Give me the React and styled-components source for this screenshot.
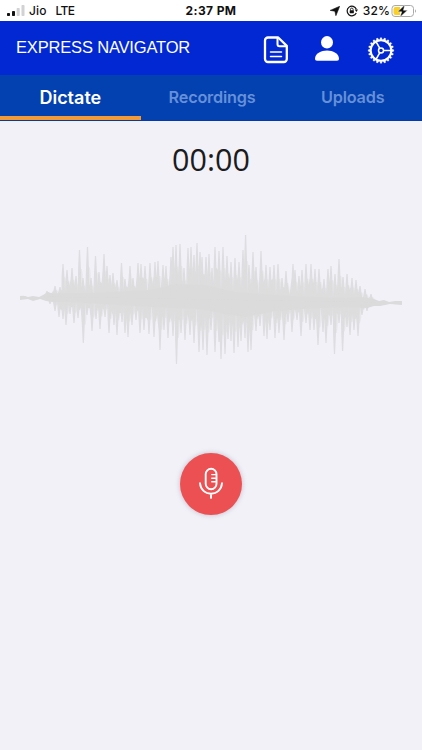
import React from "react";
import styled, { createGlobalStyle } from "styled-components";

const GlobalStyle = createGlobalStyle`
  * {
    box-sizing: border-box;
  }
  body {
    margin: 0;
    background-color: #f2f1f8;
    font-family: Inter, "Liberation Sans", sans-serif;
  }
`;

const AppContainer = styled.div`
  width: 100%;
  height: 750px;
  display: flex;
  flex-direction: column;
  background-color: #f2f1f8;
  overflow: hidden;
`;

const StatusBar = styled.div`
  height: 21px;
  flex: none;
  display: grid;
  grid-template-columns: 1fr auto 1fr;
  align-items: center;
  padding: 1px 5px 0 7px;
  background-color: #fff;
  color: #111;
  font-size: 12px;
  line-height: 20px;
`;

const StatusGroup = styled.div`
  display: flex;
  align-items: center;
  justify-content: ${(props) => (props.$end ? "flex-end" : "flex-start")};
`;

const StatusText = styled.span`
  font-weight: 500;
  margin-left: ${(props) => props.$gap || 0}px;
  letter-spacing: ${(props) => props.$spacing || 0}px;
`;

const Clock = styled.span`
  margin-right: 2px;
  font-size: 12px;
  font-weight: 700;
  letter-spacing: 0.4px;
`;

const Header = styled.header`
  height: 54px;
  flex: none;
  display: flex;
  align-items: center;
  justify-content: space-between;
  padding: 0 27px 0 16px;
  background-color: #0228d3;
`;

const Title = styled.h1`
  margin: 0;
  padding-bottom: 1px;
  color: #fff;
  font-family: "Liberation Sans", sans-serif;
  font-size: 16.5px;
  font-weight: 400;
  letter-spacing: -0.17px;
  white-space: nowrap;
`;

const HeaderIcons = styled.div`
  display: flex;
  align-items: center;
  gap: 25px;
  padding-top: 3px;
`;

const Tabs = styled.nav`
  height: 46px;
  flex: none;
  display: grid;
  grid-template-columns: repeat(3, 1fr);
  background-color: #0340b0;
  border-bottom: 1px solid #0838a0;
`;

const Tab = styled.button`
  border: 0;
  border-bottom: 4px solid ${(props) => (props.$active ? "#f29a38" : "transparent")};
  padding: ${(props) => (props.$active ? "4px 0 0" : "3px 0 0 2px")};
  background: none;
  color: ${(props) => (props.$active ? "#fff" : "#6690d8")};
  font-family: inherit;
  font-size: ${(props) => (props.$active ? 18 : 16.25)}px;
  font-weight: 600;
  letter-spacing: ${(props) => (props.$active ? 0 : -0.2)}px;
`;

const Recorder = styled.main`
  flex: 1;
  display: flex;
  flex-direction: column;
  align-items: center;
`;

const Timer = styled.div`
  margin-top: 17px;
  height: 42px;
  color: #1b1b20;
  font-family: "Open Sans", sans-serif;
  font-size: 30.5px;
  line-height: 42px;
`;

const WaveSvg = styled.svg`
  display: block;
  width: 422px;
  height: 140px;
  margin-top: 50px;
`;

const RecordButton = styled.button`
  display: flex;
  align-items: center;
  justify-content: center;
  width: 62px;
  height: 62px;
  margin-top: 83px;
  padding: 0;
  border: 0;
  border-radius: 50%;
  background-color: #ec5052;
  box-shadow: 0 0 5px rgba(110, 110, 130, 0.4);
`;

// x, y pairs of the peaks above and below the middle of the wave
const upper = [
  [47, 291], [55, 286], [60, 287], [63, 264], [67, 270], [72, 268], [76, 276],
  [79.5, 250], [83, 278], [87.5, 247], [91, 278], [95.5, 256], [99, 272],
  [104, 254], [107, 266], [110, 275], [113, 273], [117, 280], [121.5, 263],
  [125, 279], [130, 266], [133, 278], [138, 263], [141, 264], [145, 266],
  [150, 263], [155, 262], [158, 261], [163, 265], [166, 266], [171, 257],
  [173, 247], [176, 245], [180, 244], [184, 268], [188, 248], [191, 247],
  [194, 255], [197, 243], [200, 252], [202, 257], [206, 257], [209, 254],
  [212, 268], [215, 247], [219, 251], [223, 247], [227, 256], [231, 262],
  [235, 258], [239, 262], [243, 250], [245.6, 235], [249, 265], [253, 252],
  [256, 267], [261, 251], [266, 265], [270, 267], [274, 265], [278, 264],
  [282, 278], [286, 271], [293, 264], [295, 270], [299, 276], [302, 270],
  [306, 264], [311, 264], [315, 269], [319, 269], [324, 279], [328, 269],
  [331, 266], [335, 274], [339, 259], [343, 277], [347, 274], [352, 278],
  [356, 280], [360, 286], [365, 289], [371, 294],
];

const lower = [
  [50, 304], [55, 311], [59, 317], [63, 319], [66, 325], [70, 314], [74, 323],
  [78, 318], [83.3, 343], [87, 315], [92, 331], [96, 319], [100, 329],
  [105, 317], [109, 333], [114, 325], [117, 335], [122, 322], [125, 333],
  [128, 337], [132, 325], [136, 320], [140, 333], [144, 330], [149, 334],
  [154, 337], [160, 350], [164, 330], [168, 338], [173, 336], [176.5, 364],
  [181, 333], [185, 340], [190, 335], [194, 343], [199, 352], [203, 350],
  [207, 355], [211, 330], [215, 352], [219, 342], [221, 359], [225, 354],
  [228, 339], [231, 341], [234, 353], [238, 347], [241, 341], [245, 338],
  [248, 352], [251, 350], [256, 331], [260, 326], [264, 336], [267, 339],
  [270, 330], [275, 338], [279, 333], [284, 340], [288, 322], [292, 332],
  [297, 320], [301, 336], [306, 323], [310, 330], [314, 330], [318, 345],
  [323, 332], [326, 343], [331, 325], [334.5, 354], [339, 323], [342.6, 351],
  [347, 327], [350, 335], [354, 330], [358, 336], [362, 315], [367, 311],
];

// how far the notch between two peaks stays from the middle
const notches = [0.5, 0.3, 0.62, 0.12, 0.42, 0.55, 0.2];

const axis = (x) => 296 + (x / 422) * 7;

function outline(peaks, shoulder) {
  const first = peaks[0][0] - 3;
  const last = peaks[peaks.length - 1][0] + 3;
  const points = [`${first} ${axis(first)}`];
  peaks.forEach(([x, y], i) => {
    const height = y - axis(x);
    const middle = axis(x) + height * shoulder;
    points.push(`${x - 1.4} ${middle}`, `${x - 0.6} ${y}`, `${x + 0.6} ${y}`, `${x + 1.4} ${middle}`);
    const next = peaks[i + 1];
    if (next) {
      const smaller = Math.min(Math.abs(height), Math.abs(next[1] - axis(next[0])));
      const notch = Math.sign(height) * smaller * notches[i % notches.length];
      points.push(`${(x + next[0]) / 2} ${axis(x) + notch}`);
    }
  });
  points.push(`${last} ${axis(last)}`);
  return `M${points.join("L")}Z`;
}

// a shorter copy of the peaks, slightly to the side
const echo = (peaks) => peaks.map(([x, y]) => [x + 1.7, axis(x) + (y - axis(x)) * 0.6]);

function Waveform() {
  return (
    <WaveSvg viewBox="0 230 422 140" fill="#dbdbdc">
      <path d="M20 296Q24 295 28 297L33 296L39 297L43 295L48 292L54 294L60 293L90 293L150 290L175 284L205 285L235 292L290 296L345 298L360 297L368 298L374 299L379 301L384 300L389 302L395 301L402 301V305L390 304L380 306L374 306L367 308L345 307L303 309L275 311L246 317L225 314L200 309L150 307L103 304L70 302L53 302L46 301L40 299L33 301L28 299L20 300Z" />
      <path opacity=".88" d={outline(upper, 0.62)} />
      <path opacity=".88" d={outline(lower, 0.62)} />
      <path opacity=".45" d={outline(echo(upper), 0.8)} />
      <path opacity=".45" d={outline(echo(lower), 0.8)} />
    </WaveSvg>
  );
}

function SignalIcon() {
  return (
    <svg width="19" height="12" viewBox="0 0 19 12">
      <rect x="0" y="8" width="3" height="3" rx=".7" fill="#111" />
      <rect x="5" y="6" width="3" height="5" rx=".7" fill="#111" />
      <rect x="9.7" y="3" width="3" height="8" rx=".7" fill="#d2d2d4" />
      <rect x="14.5" y="0" width="3" height="11" rx=".7" fill="#d2d2d4" />
    </svg>
  );
}

function LocationIcon() {
  return (
    <svg width="10" height="10" viewBox="0 0 10 10">
      <path d="M9.7.3 5.9 9.7 4.9 5.2.2 4.4Z" fill="#111" stroke="#111" strokeWidth=".6" strokeLinejoin="round" />
    </svg>
  );
}

const LockSvg = styled.svg`
  margin: 0 5px 0 6px;
`;

function RotationLockIcon() {
  return (
    <LockSvg width="12" height="12" viewBox="0 0 11 11" fill="none" stroke="#111">
      <path d="M9.4 7.4A4.4 4.4 0 1 1 9.5 3.8" strokeWidth="1.1" />
      <path d="M8 4.2h3L9.6 6.4Z" fill="#111" stroke="none" />
      <path d="M4.1 5V4a1.2 1.2 0 0 1 2.4 0v1" strokeWidth=".8" />
      <rect x="3.4" y="4.8" width="3.8" height="2.8" rx=".4" fill="#111" stroke="none" />
    </LockSvg>
  );
}

function BatteryIcon() {
  return (
    <svg width="27" height="14" viewBox="0 0 27 14">
      <rect x="2" y="1.5" width="21.5" height="11" rx="3" fill="#fff" stroke="#a9a9ab" />
      <path d="M5.5 3H10v8H5.5a2 2 0 0 1-2-2V5a2 2 0 0 1 2-2Z" fill="#fbd024" />
      <path d="M25 5.2q2 1.8 0 3.6Z" fill="#a9a9ab" />
      <path d="M14.8.7 7.7 7.8h4L9.9 13.3 17.5 6.2h-4Z" fill="#111" stroke="#fff" strokeWidth=".5" />
    </svg>
  );
}

function DocumentIcon() {
  return (
    <svg width="26" height="28" viewBox="0 0 26 28" fill="none" stroke="#fff" strokeWidth="2.3" strokeLinejoin="round">
      <path d="M5 1.5h10.2l8.6 8.3V23a3 3 0 0 1-3 3H5a3 3 0 0 1-3-3V4.5a3 3 0 0 1 3-3Z" />
      <path d="M14.5 1.8v6.4a2 2 0 0 0 2 2h7" strokeWidth="2" />
      <path d="M7.5 16h11M7.5 20.5h11" strokeWidth="1.5" strokeLinecap="round" />
    </svg>
  );
}

function PersonIcon() {
  return (
    <svg width="28" height="28" viewBox="1 .5 28 28" fill="#fff">
      <ellipse cx="14" cy="6.8" rx="6" ry="6.2" />
      <path d="M2 23.5C2 18 8 15.1 14 15.1S26 18 26 23.5Q26 25.3 24 25.3H4Q2 25.3 2 23.5Z" />
    </svg>
  );
}

function GearIcon() {
  const teeth = Array.from({ length: 20 }, (_, i) => i * 18);
  return (
    <svg width="28" height="28" viewBox="-14 -14.5 28 28" fill="none" stroke="#fff">
      <circle r="10.3" strokeWidth="2" />
      {teeth.map((angle) => (
        <path key={angle} d="M-1.2-10.8-.7-12.8H.7L1.2-10.8Z" fill="#fff" strokeWidth=".3" transform={`rotate(${angle})`} />
      ))}
      <circle r="2.5" strokeWidth="1.5" />
      <path d="M2.5 0H10M-1.3-2.3-5-8.8M-1.3 2.3-5 8.8" strokeWidth="1.6" />
    </svg>
  );
}

function MicIcon() {
  return (
    <svg width="26" height="34" viewBox="0 0 26 34" fill="none" stroke="#fff" strokeWidth="1.9" strokeLinecap="round">
      <rect x="7.7" y="1.8" width="10.8" height="20.4" rx="5.4" />
      <path d="M13.7 7.6h4M13.7 11.2h4M13.7 14.8h4" strokeWidth="1.4" />
      <path d="M2 16.3c.5 6.4 5.2 10.4 11 10.4s10.5-4 11-10.4M13 26.9v4" />
    </svg>
  );
}

function App() {
  return (
    <AppContainer>
      <GlobalStyle />
      <StatusBar>
        <StatusGroup>
          <SignalIcon />
          <StatusText $gap={3} $spacing={0.1}>Jio</StatusText>
          <StatusText $gap={9} $spacing={-0.6}>LTE</StatusText>
        </StatusGroup>
        <Clock>2:37 PM</Clock>
        <StatusGroup $end>
          <LocationIcon />
          <RotationLockIcon />
          <StatusText $spacing={0.1}>32%</StatusText>
          <BatteryIcon />
        </StatusGroup>
      </StatusBar>
      <Header>
        <Title>EXPRESS NAVIGATOR</Title>
        <HeaderIcons>
          <DocumentIcon />
          <PersonIcon />
          <GearIcon />
        </HeaderIcons>
      </Header>
      <Tabs>
        <Tab $active>Dictate</Tab>
        <Tab>Recordings</Tab>
        <Tab>Uploads</Tab>
      </Tabs>
      <Recorder>
        <Timer>00:00</Timer>
        <Waveform />
        <RecordButton aria-label="Record">
          <MicIcon />
        </RecordButton>
      </Recorder>
    </AppContainer>
  );
}

export default App;
